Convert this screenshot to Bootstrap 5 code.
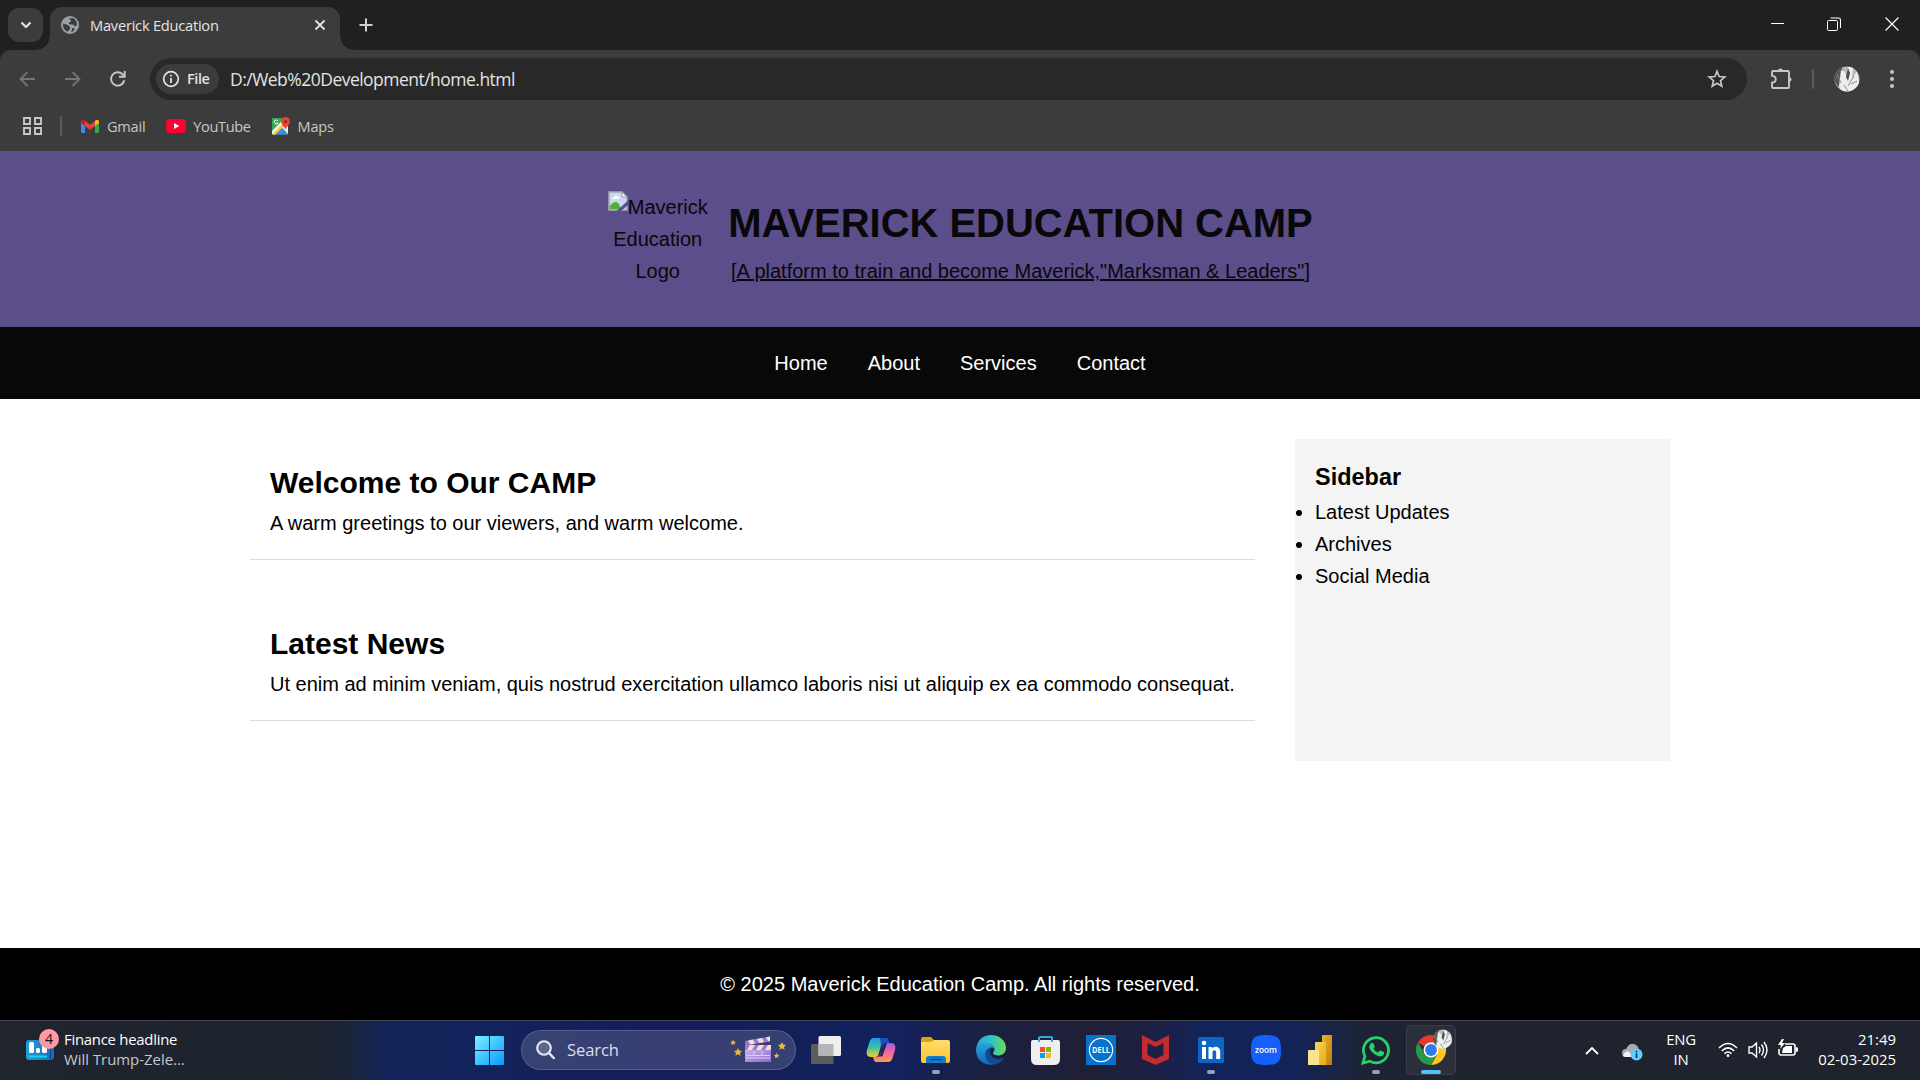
<!DOCTYPE html>
<html lang="en">
<head>
<meta charset="utf-8">
<title>Maverick Education</title>
<meta name="viewport" content="width=device-width, initial-scale=1">
<link href="https://cdn.jsdelivr.net/npm/bootstrap@5.3.0/dist/css/bootstrap.min.css" rel="stylesheet">
<style>
html,body{height:1080px;overflow:hidden}
body{font-family:"Open Sans","Noto Sans",sans-serif;color:#e3e3e3;background:#fff}
svg{display:block;flex:none}
.ui-text{white-space:nowrap;line-height:20px}
/* browser window */
.tabstrip{height:50px;background:#1f2120}
.tab-menu{width:35px;height:34px;border-radius:11px;background:#3c3c3c;margin:8px 7px 0 8px}
.active-tab{width:290px;height:43px;margin-top:7px;padding:0 10px 7px 11px;border-radius:12px 12px 0 0;background:#3c3c3c}
.active-tab::before,.active-tab::after{content:"";position:absolute;bottom:0;width:14px;height:14px}
.active-tab::before{left:-14px;background:radial-gradient(circle at 0 0,transparent 13.5px,#3c3c3c 14px)}
.active-tab::after{right:-14px;background:radial-gradient(circle at 100% 0,transparent 13.5px,#3c3c3c 14px)}
.tab-title{font-size:14.7px;letter-spacing:-.26px;margin-left:11px}
.win-buttons{padding:0 21px 2px 0;gap:43px}
.chrome-bars{background:#1f2120}
.tools{height:101px;background:#3c3c3c;border-radius:11px 11px 0 0}
.address-row{height:58px;padding-left:18px}
.omnibox{width:1597px;height:42px;border-radius:21px;background:#282828;padding:0 20px 0 6px;margin-left:23px}
.file-chip{width:63px;height:30px;border-radius:15px;background:#3c3c3c;padding-left:6px}
.file-chip span{font-size:14.5px;font-weight:600;letter-spacing:-.4px;margin-left:7px}
.url-text{font-size:17.5px;letter-spacing:-.52px;margin-left:11px}
.vline{width:2px;height:20px;background:#5b5b5b;border-radius:1px}
.marks{height:36px;padding-left:23px;font-size:14.6px;letter-spacing:-.25px;color:#c7c7c7}
/* web page */
.site{font-family:"Liberation Sans",Arial,sans-serif;font-size:20px;line-height:32px;color:#000}
.site h1,.site h2,.site h3,.site p,.site ul{margin:0}
.site-head{height:176px;background:#5b4e8b;color:#080808;padding:40px;gap:20px;text-align:center}
.site-head h1{font-size:40px;line-height:64px;font-weight:700;letter-spacing:-.03px}
.logo-alt{width:101px}
.logo-alt svg{display:inline-block;vertical-align:baseline;margin-top:-4px;transform:translateY(-3px)}
.site-nav{height:72px;background:#080808;gap:40px}
.site-nav a{color:#fff;text-decoration:none}
.site-main{width:1420px;height:549px;margin:0 auto;padding-top:40px;gap:40px}
.story{padding:20px;border-bottom:1px solid #ddd;margin-bottom:40px}
.story h2{font-size:30px;line-height:48px;font-weight:700}
.side{width:375px;height:322px;background:#f4f4f4;padding:20px}
.side h3{font-size:23.4px;line-height:37.4px;font-weight:700;letter-spacing:.05px}
.side ul{padding:0}
.site-foot{height:72px;background:#000;color:#fff}
/* taskbar */
.taskbar{height:60px;padding-bottom:1px;border-top:1px solid #43464f;background:linear-gradient(90deg,#1f242d 0,#1d232e 310px,#1a2438 345px,#12245a 390px,#12225a 500px,#171c5c 680px,#12205a 790px,#13215c 900px,#1b203f 990px,#1f1f36 1090px,#1b2046 1160px,#12235a 1205px,#13235a 1290px,#1c2338 1360px,#1f232e 1430px,#1e232d 100%)}
.news{width:462px;padding-left:26px}
.news-copy{font-size:14.9px;line-height:20px;letter-spacing:-.25px;color:#fff;margin:-3px 0 0 5px}
.slot{width:55px;height:58px}
.search-pill{width:275px;height:40px;border-radius:20px;margin:0 2.5px 0 4px;background:rgba(255,255,255,.15);border:1px solid rgba(255,255,255,.16);padding:0 9px 0 14px}
.search-pill span{font-size:16.6px;color:#dcdeea;margin-left:12px;letter-spacing:-.1px}
.run-dot{bottom:5px;left:50%;width:8px;height:4px;margin-left:-4px;border-radius:2px;background:#9a9db5}
.run-dot.wide{width:20px;margin-left:-10px;background:#4cc2ff}
.slot.current::before{content:"";position:absolute;left:2px;right:3px;top:4px;bottom:4px;border-radius:5px;background:rgba(255,255,255,.06);border:1px solid rgba(255,255,255,.07)}
.tray{font-size:14.9px;line-height:20px;color:#fff;padding-right:24px}
.tray .ui-text{margin-top:-3px}
</style>
<script src="https://cdn.jsdelivr.net/npm/bootstrap@5.3.0/dist/js/bootstrap.bundle.min.js"></script>
</head>
<body>
<div class="chrome-bars">
  <div class="tabstrip d-flex">
    <div class="tab-menu d-flex align-items-center justify-content-center"><svg width="12" height="8" viewBox="0 0 12 8"><path d="M1.500 1.500 6 6l4.500-4.500" fill="none" stroke="#e3e3e3" stroke-width="2.200"/></svg></div>
    <div class="active-tab position-relative d-flex align-items-center">
      <svg width="18" height="18" viewBox="0 0 18 18"><circle cx="9" cy="9" r="9" fill="#9aa0a6"/><path d="M2 7.500 7 9l2 2v2l-2 2.500C4 15 1.500 12 2 7.500ZM7.500 2.500 12 2c3 1.500 4.300 4.500 4 7l-2 1.500-2-2H9L7.500 7l2.300-1.500V4ZM11 12l3 .5-2 3-2 .5 1-2Z" fill="#3c3c3c"/></svg>
      <span class="tab-title ui-text">Maverick Education</span>
      <svg class="ms-auto" width="19" height="12" viewBox="0 0 19 12"><path d="m4.500 1.500 9 9M13.500 1.500l-9 9" stroke="#e3e3e3" stroke-width="1.800"/></svg>
    </div>
    <svg style="margin:18px 0 0 19px" width="14" height="14" viewBox="0 0 14 14"><path d="M7 .5v13M.5 7h13" stroke="#d0d0d0" stroke-width="2"/></svg>
    <div class="win-buttons d-flex align-items-center ms-auto">
      <svg width="13" height="13" viewBox="0 0 13 13"><path d="M0 5.500h13" stroke="#fff"/></svg>
      <svg width="14" height="14" viewBox="0 0 14 14" fill="none" stroke="#fff"><rect x=".5" y="3.500" width="10" height="10" rx="1"/><path d="M3.500 1h8a2 2 0 0 1 2 2v8" stroke-width="1.100"/></svg>
      <svg style="margin-left:1px" width="14" height="14" viewBox="0 0 14 14"><path d="m.5.5 13 13M13.500.5l-13 13" stroke="#fff" stroke-width="1.200"/></svg>
    </div>
  </div>
  <div class="tools">
    <div class="address-row d-flex align-items-center">
      <svg width="18" height="16" viewBox="0 0 18 16" fill="none" stroke="#757575" stroke-width="1.800"><path d="M17 8H3M9.500 1 2.500 8l7 7"/></svg>
      <svg style="margin-left:28px" width="18" height="16" viewBox="0 0 18 16" fill="none" stroke="#757575" stroke-width="1.800"><path d="M1 8h14M8.500 1l7 7-7 7"/></svg>
      <svg style="margin-left:27px" width="18" height="18" viewBox="0 0 18 18"><path d="M15.300 10.300A6.700 6.700 0 1 1 13.500 4.200L15.500 6" fill="none" stroke="#c7c7c7" stroke-width="1.900"/><path d="M15.700 1v5.700H10" fill="none" stroke="#c7c7c7" stroke-width="1.900"/></svg>
      <div class="omnibox d-flex align-items-center">
        <div class="file-chip d-flex align-items-center"><svg width="18" height="18" viewBox="0 0 18 18"><circle cx="9" cy="9" r="7.300" fill="none" stroke="#e3e3e3" stroke-width="1.700"/><path d="M9 8v5M9 4.800v1.800" stroke="#e3e3e3" stroke-width="1.800"/></svg><span class="ui-text">File</span></div>
        <span class="url-text ui-text">D:/Web%20Development/home.html</span>
        <svg class="ms-auto" width="20" height="20" viewBox="0 0 20 20"><path d="m10 2.300 2.100 5.200 5.700.5-4.300 3.700 1.300 5.600-4.800-3-4.800 3 1.300-5.600L2.200 8l5.700-.5Z" fill="none" stroke="#c7c7c7" stroke-width="1.700"/></svg>
      </div>
      <svg style="margin-left:23px" width="22" height="22" viewBox="0 0 22 22"><path d="M3 3h15q1 0 1 1v15q0 1-1 1H3q-1 0-1-1v-4.500c5-.3 5-6.300 0-6.600V4q0-1 1-1Z" fill="none" stroke="#c7c7c7" stroke-width="1.900" stroke-linejoin="round"/><path d="M8 3a2.500 2.500 0 0 1 5 0ZM19 9a2.500 2.500 0 0 1 0 5Z" fill="#c7c7c7"/></svg>
      <div class="vline" style="margin-left:20px"></div>
      <svg style="margin-left:20px" width="26" height="26" viewBox="0 0 26 26"><defs><clipPath id="av"><circle cx="13" cy="13" r="12.500"/></clipPath><g id="face" clip-path="url(#av)"><path fill="#b8b8b8" d="M0 0h26v26H0z"/><path d="M0 6 8 1l1 15-5 5-4-7Z" fill="#555"/><path d="m5 20 2-16 4 2 2 7 1-12h5l-1 12 5-8 3 15-9 7H8Z" fill="#eee"/><path d="m14 2 2 5-2 8-2-4Z" fill="#4c4c4c"/><path d="m3 8 4 9M20 10l-6 10M10 19l4 6M23 15l-6 3" fill="none" stroke="#8b8b8b"/></g></defs><use href="#face"/></svg>
      <svg style="margin-left:30px" width="4" height="20" viewBox="0 0 4 20" fill="#c7c7c7"><circle cx="2" cy="3" r="2"/><circle cx="2" cy="10" r="2"/><circle cx="2" cy="17" r="2"/></svg>
    </div>
    <div class="marks d-flex align-items-center">
      <svg width="19" height="18" viewBox="0 0 19 18" fill="none" stroke="#c7c7c7" stroke-width="1.900"><path d="M1 1h6v6H1zM12 1h6v6h-6zM1 11h6v6H1zM12 11h6v6h-6z"/></svg>
      <div class="vline" style="margin-left:18px"></div>
      <svg style="margin-left:19px" width="18" height="14" viewBox="0 0 18 14"><path d="M0 3.500 4 6v8H1.500Q0 14 0 12.500Z" fill="#4285f4"/><path d="m14 6 4-2.500v9q0 1.500-1.500 1.500H14Z" fill="#34a853"/><path d="M4 2v5l5 3.700L14 7V2L9 5.700Z" fill="#ea4335"/><path d="M14 1.700C16 0 18 .5 18 3v1l-4 3Z" fill="#fbbc04"/><path d="M4 1.700C2 0 0 .5 0 3v1l4 3Z" fill="#c5221f"/></svg>
      <span class="ui-text" style="margin-left:8px">Gmail</span>
      <svg style="margin-left:21px" width="20" height="14" viewBox="0 0 20 14"><rect width="20" height="14" rx="3.500" fill="#ff0033"/><path d="m8 4 5.300 3L8 10Z" fill="#fff"/></svg>
      <span class="ui-text" style="margin-left:7px;letter-spacing:-.4px">YouTube</span>
      <svg style="margin-left:21px" width="18" height="18" viewBox="0 0 18 18"><path d="M1 1h14q1 0 1 1v15.500H1q-1 0-1-1V2q0-1 1-1Z" fill="#34a853"/><path d="m8.500 9.500 7.500 8H1Z" fill="#4285f4"/><path d="M16 6v11L9 9.500Z" fill="#e8eaed"/><path d="M0 13.500 10.500 3l3 4L3 17.500H1q-1 0-1-1Z" fill="#f1f1f1"/><path d="m1 16.500 10-10 1.700 1.700-9.200 9.300H1.500Z" fill="#fbc934"/><path d="M0 2q0-1 1-1h9v2.500L0 14Z" fill="#34a853"/><path d="M5.800 3.800A2 2 0 1 0 6 6H4.300" fill="none" stroke="#fff"/><path d="M13.500 0A4.400 4.400 0 0 1 18 4.400C18 8 14.500 9 13.500 12.500 12.500 9 9.200 8 9.200 4.400A4.400 4.400 0 0 1 13.500 0Z" fill="#ea4335"/><circle cx="13.500" cy="4.500" r="1.600" fill="#9b2720"/></svg>
      <span class="ui-text" style="margin-left:8px">Maps</span>
    </div>
  </div>
</div>

<div class="site">
  <header class="site-head d-flex justify-content-center">
    <div class="logo-alt"><svg width="20" height="20" viewBox="0 0 20 20"><path d="M1 1h13l5 5v13H1z" fill="#c5d8f7" stroke="#aaa" stroke-width="1.500"/><path d="M4 8q0-2 2-2 1-3 3.500-1Q12 6 11 8Z" fill="#fff"/><path d="M2 18v-3q5-7 9-2l2 5Z" fill="#4fae35"/><path d="M20 9.500V14l-7 6H8.500Z" fill="#5b4e8b"/><path d="M14 1v5h5Z" fill="#fff" stroke="#999"/></svg>Maverick Education Logo</div>
    <div>
      <h1>MAVERICK EDUCATION CAMP</h1>
      <p>[<u>A platform to train and become Maverick,"Marksman &amp; Leaders"</u>]</p>
    </div>
  </header>
  <nav class="site-nav d-flex justify-content-center align-items-center"><a href="#">Home</a><a href="#">About</a><a href="#">Services</a><a href="#">Contact</a></nav>
  <main class="site-main d-flex align-items-start">
    <div class="flex-grow-1">
      <section class="story"><h2>Welcome to Our CAMP</h2><p>A warm greetings to our viewers, and warm welcome.</p></section>
      <section class="story"><h2>Latest News</h2><p>Ut enim ad minim veniam, quis nostrud exercitation ullamco laboris nisi ut aliquip ex ea commodo consequat.</p></section>
    </div>
    <aside class="side flex-shrink-0"><h3>Sidebar</h3><ul><li>Latest Updates</li><li>Archives</li><li>Social Media</li></ul></aside>
  </main>
  <footer class="site-foot d-flex justify-content-center align-items-center">© 2025 Maverick Education Camp. All rights reserved.</footer>
</div>

<div class="taskbar d-flex align-items-center">
  <div class="news d-flex align-items-center">
    <svg width="33" height="32" viewBox="0 0 33 32" style="margin-top:-11px"><defs><linearGradient id="nw"><stop stop-color="#1f9fd0"/><stop offset="1" stop-color="#1769c0"/></linearGradient></defs><rect y="11" width="28" height="20" rx="3" fill="url(#nw)"/><path d="M24 13h1v18h-1z" fill="#0d3d7a"/><rect x="3" y="13" width="5" height="11" rx="1.500" fill="#fff"/><rect x="10" y="19" width="4" height="5" rx="1.500" fill="#fff"/><rect x="16" y="16" width="5" height="8" rx="1.500" fill="#fff"/><path d="M3 27.500h18" stroke="#19d3ee" stroke-width="2"/><circle cx="23" cy="10" r="10" fill="#ff99a4"/><text x="23" y="15.300" text-anchor="middle" font-size="14" fill="#111">4</text></svg>
    <div class="news-copy"><div class="ui-text">Finance headline</div><div class="ui-text" style="color:#c6c8cc;letter-spacing:0">Will Trump-Zele...</div></div>
  </div>
  <div class="slot d-flex align-items-center justify-content-center"><svg width="29" height="29" viewBox="0 0 29 29"><defs><linearGradient id="wn" x2="1" y2="1"><stop stop-color="#7cf0ff"/><stop offset="1" stop-color="#0798ff"/></linearGradient></defs><path d="M1 0h13v14H0V1q0-1 1-1ZM15 0h13q1 0 1 1v13H15ZM0 15h14v14H1q-1 0-1-1ZM15 15h14v13q0 1-1 1H15Z" fill="url(#wn)"/></svg></div>
  <div class="search-pill d-flex align-items-center">
    <svg width="19" height="20" viewBox="0 0 19 20"><circle cx="8" cy="8" r="6.800" fill="#5c6791" stroke="#e8eaf2" stroke-width="2.100"/><path d="m13 13 4.700 5" stroke="#e8eaf2" stroke-width="2.500" stroke-linecap="round"/></svg>
    <span class="ui-text">Search</span>
    <svg class="ms-auto" width="56" height="28" viewBox="0 0 56 28"><defs><linearGradient id="cl" y2="1"><stop stop-color="#c8b6f0"/><stop offset="1" stop-color="#9068c8"/></linearGradient></defs><path d="M15 13h26v13H15Z" fill="url(#cl)"/><path d="m15 5 25-4.500v5L15.500 9.500Z" fill="#9b7cd0"/><path d="m18 4.500 5-1 2 4.300-4.500.8ZM27 3l5-1 2 4.200-4.500.8ZM36 1.300l4-.8v4.600l-1.700.2Z" fill="#f8ddd5"/><path d="M15 9h26v5H15Z" fill="#9b7cd0"/><path d="m20 9-3 5h5l3-5ZM29 9l-3 5h5l3-5ZM38 9l-3 5h5l1-1V9Z" fill="#f8ddd5"/><path d="M16 19.500h24M16 22h24M24 15v4M32 15v4" stroke="#ddcdf7"/><g fill="#f1b63b"><path id="st" d="m8 12 1.200 2.600 2.800.3-2 2 .6 2.800L8 18.300l-2.600 1.400.6-2.800-2-2 2.800-.3Z"/><use href="#st" transform="translate(44 -6)"/><use href="#st" transform="translate(-2.500 -4.700) scale(.7)"/><use href="#st" transform="translate(41 8.500) scale(.7)"/></g></svg>
  </div>
  <div class="slot d-flex align-items-center justify-content-center"><svg width="30" height="28" viewBox="0 0 30 28"><rect y="8" width="22.500" height="20" rx="1.500" fill="#5c5c5c"/><rect x="7.500" width="22.500" height="20" rx="1.500" fill="#efefef"/><path d="M7.500 8h15v12H9q-1.500 0-1.500-1.500Z" fill="#b5b5b5"/></svg></div>
  <div class="slot d-flex align-items-center justify-content-center"><svg width="30" height="28" viewBox="0 0 30 28"><defs><linearGradient id="ca" x2="0" y2="1"><stop stop-color="#1b9bea"/><stop offset=".5" stop-color="#3dc3a0"/><stop offset="1" stop-color="#f6cd28"/></linearGradient><linearGradient id="cb" x2="0" y2="1"><stop stop-color="#a65ae8"/><stop offset=".5" stop-color="#f267a0"/><stop offset="1" stop-color="#ff9a4c"/></linearGradient></defs><path d="M8 2h11c3 0 3 2 4 5h-4c-3 0-4 2-4.500 4.500l-2 7C12 20 11 21 9 21H5c-4 0-5-3-4-7L3.500 6C4.300 3.500 5.500 2 8 2Z" fill="url(#ca)"/><path d="M14 2h5c3 0 3 2 4 5h-4c-2 0-3 1-4 3Z" fill="#1b50c4"/><path d="M22 26H11c-3 0-3-2-4-5h3c3 0 4-1.500 4.700-4l2-7c.6-2 1.500-3 4.300-3h4c4 0 5 3 4 7l-2.500 8c-.8 2.500-2 4-4.500 4Z" fill="url(#cb)"/><path d="m15.500 14 2-5c1-2 1.500-2 3.500-2l-4.500 13-4 1c2-1 2-3 3-7Z" fill="#18255d"/></svg></div>
  <div class="slot position-relative d-flex align-items-center justify-content-center"><svg width="30" height="28" viewBox="0 0 30 28"><defs><linearGradient id="fo" x2="0" y2="1"><stop stop-color="#ffdd70"/><stop offset="1" stop-color="#ffc52c"/></linearGradient></defs><path d="M0 3q0-2 2-2h8l3 3h14v5H0Z" fill="#e3a008"/><path d="M0 7q0-1 1-1h9l3-2h14q2 0 2 2v19q0 2-2 2H2q-2 0-2-2Z" fill="url(#fo)"/><path d="M5 23q0-3 3-3h14q3 0 3 3v4H5Z" fill="#127ccc"/><path d="M9 23.500h12" stroke="#0a4b86" stroke-width="1.500"/></svg><i class="run-dot position-absolute"></i></div>
  <div class="slot d-flex align-items-center justify-content-center"><svg width="30" height="30" viewBox="0 0 30 30"><defs><linearGradient id="eg"><stop stop-color="#26a9df"/><stop offset=".55" stop-color="#32c5bd"/><stop offset="1" stop-color="#6ddc50"/></linearGradient><linearGradient id="eb" x2="0" y2="1"><stop stop-color="#2aa6e2"/><stop offset="1" stop-color="#1265ba"/></linearGradient></defs><path d="M0 15C1 5 7 0 15 0c9 0 15 6 15 13 0 5-4 7.500-8 7.500-3 0-5-1-5-2.500 0-1 1.500-2 1.500-4 0-3-3-5.500-7-5.500C6 8.500 1 12 0 15Z" fill="url(#eg)"/><path d="M0 15C0 11 5 7.500 10 7.500c5 0 8.500 3 8.500 6.500-1-1.500-3-2-5-1-4 2-4 8-.5 11.500 3 3 8 4 11 2.500C15 33 0 29 0 15Z" fill="url(#eb)"/><path d="M13 13c-6 3-5 11 1 15 5 3 12-.5 14-5.500-5 3-13 1-14-5-.2-2 .5-3.500 1.500-5Z" fill="#0e4d91"/></svg></div>
  <div class="slot d-flex align-items-center justify-content-center"><svg width="30" height="30" viewBox="0 0 30 30"><path d="M0 7q0-2 2-2h25q2 0 2 2v17q0 6-6 6H6q-6 0-6-6Z" fill="#efefef"/><path d="M8 7V2.500Q8 2 9.500 2h10Q21 2 21 2.500V7" fill="none" stroke="#2ba9e8" stroke-width="2"/><path d="M9 12h5v5H9z" fill="#f25022"/><path d="M15 12h5v5h-5z" fill="#7fba00"/><path d="M9 18h5v5H9z" fill="#00a4ef"/><path d="M15 18h5v5h-5z" fill="#ffb900"/></svg></div>
  <div class="slot d-flex align-items-center justify-content-center"><svg width="30" height="30" viewBox="0 0 30 30"><path fill="#0672cb" d="M0 0h30v30H0z"/><circle cx="15" cy="15" r="11.600" fill="none" stroke="#fff" stroke-width="1.200"/><text x="15" y="17.800" text-anchor="middle" font-size="8" font-weight="700" fill="#fff" textLength="18" lengthAdjust="spacingAndGlyphs">DELL</text></svg></div>
  <div class="slot d-flex align-items-center justify-content-center"><svg width="28" height="30" viewBox="0 0 28 30"><path d="m0 0 13.500 7L27 0v24l-13.500 6L0 24Zm5.500 8v12l8 4 8-4V8l-8 4Z" fill="#c42b2c"/></svg></div>
  <div class="slot position-relative d-flex align-items-center justify-content-center"><svg width="26" height="26" viewBox="0 0 26 26"><rect width="26" height="26" rx="1.500" fill="#0a66c2"/><path d="M4 10h4v12H4zM10.500 10h3.700v1.700c2-3.200 8-2.500 8 3V22h-4v-6.500c0-3-3.700-3-3.700 0V22h-4z" fill="#fff"/><circle cx="6" cy="6" r="2.300" fill="#fff"/></svg><i class="run-dot position-absolute"></i></div>
  <div class="slot d-flex align-items-center justify-content-center"><svg width="30" height="30" viewBox="0 0 30 30"><path d="M15 0C27 0 30 3 30 15s-3 15-15 15S0 27 0 15 3 0 15 0Z" fill="#1560fa"/><text x="15" y="17.500" text-anchor="middle" font-size="8.500" font-weight="600" fill="#fff" textLength="22" lengthAdjust="spacingAndGlyphs">zoom</text></svg></div>
  <div class="slot d-flex align-items-center justify-content-center"><svg width="26" height="30" viewBox="0 0 26 30"><defs><linearGradient id="p1" x2="1" y2="1"><stop stop-color="#eab52b"/><stop offset="1" stop-color="#c6780c"/></linearGradient><linearGradient id="p2" x2="1" y2="1"><stop stop-color="#f7d65b"/><stop offset="1" stop-color="#e8ac15"/></linearGradient></defs><path d="M14 1q0-1 1-1h9v30H14z" fill="url(#p1)"/><path d="M7 8q0-1 1-1h9q1 0 1 1v22H7z" fill="url(#p2)"/><path d="M0 16q0-1 1-1h9q1 0 1 1v14H0z" fill="#f9e589"/></svg></div>
  <div class="slot position-relative d-flex align-items-center justify-content-center"><svg width="30" height="30" viewBox="0 0 31 31"><path d="M2 29l2-7.200A13 13 0 1 1 9 27Z" fill="none" stroke="#25d366" stroke-width="2.800"/><path d="M10.500 8.500c1-1 2-.5 2.500.5l1.200 2.800c.2.800-.8 1.500-1.300 2.200 1 2 2.600 3.400 4.600 4.200l1.700-2c.5-.4 1-.2 1.600.1l2.600 1.300c.8.5.6 2-.1 2.900-1.300 1.600-3.500 2.200-5.600 1.300-4-1.500-7-4-8.800-7.500-1-2-.1-4.500 1.600-5.800Z" fill="#25d366"/></svg><i class="run-dot position-absolute"></i></div>
  <div class="slot current position-relative d-flex align-items-center justify-content-center"><svg class="position-relative" width="37" height="42" viewBox="0 0 37 42" style="left:3.500px"><g transform="translate(0 6)"><path d="M2 7.500A15 15 0 0 1 28 7.500L15 15Z" fill="#e8392f"/><path d="M15 7.500h13A15 15 0 0 1 15 30L21.500 18.700Z" fill="#ffc524"/><path d="M2 7.500 8.500 18.700c3 4 8 5 13 0L15 30A15 15 0 0 1 2 7.500Z" fill="#279847"/><circle cx="15" cy="15" r="7.500" fill="#fff"/><circle cx="15" cy="15" r="5.900" fill="#3079e8"/></g><use href="#face" transform="translate(16.500 0) scale(.77)"/></svg><i class="run-dot wide position-absolute"></i></div>
  <div class="tray d-flex align-items-center ms-auto">
    <svg width="14" height="9" viewBox="0 0 14 9"><path d="m1 8 6-6 6 6" fill="none" stroke="#fff" stroke-width="1.800"/></svg>
    <svg style="margin:4px 0 0 23px" width="21" height="18" viewBox="0 0 21 18"><path d="M4 14a4 4 0 0 1 0-8q3-6 8-5 4 1 5 6v7Z" fill="#aaa"/><path d="M1 13q1-4 5-5l6 6H4q-2 0-3-1Z" fill="#f2f2f2"/><circle cx="14.500" cy="11.500" r="6" fill="#60cdff"/><path d="M14.500 10.500v4.500M14.500 7.800v1.700" stroke="#12303f" stroke-width="1.600"/></svg>
    <div class="text-center ui-text" style="margin-left:23px;width:30px;letter-spacing:-.3px">ENG<br>IN</div>
    <svg style="margin-left:22px" width="20" height="16" viewBox="0 0 20 16" fill="none" stroke="#fff" stroke-width="1.500"><path d="M1 6q9-9 18 0M3.800 9q6.200-6.200 12.400 0M6.500 11.700q3.500-3.400 7 0"/><circle cx="10" cy="13.700" r="1.400" fill="#fff" stroke="none"/></svg>
    <svg style="margin-left:10px" width="20" height="18" viewBox="0 0 20 18" fill="none" stroke="#fff" stroke-width="1.400"><path d="M1 6h3l4.500-4v14L4 12H1Zm10 0q2 3 0 6m2.500-8.500q4 5.500 0 11M16 1q6 8 0 16"/></svg>
    <svg style="margin:-4px 0 0 10px" width="20" height="18" viewBox="0 0 20 18"><path d="M7 5h8q2 0 2 2v7q0 2-2 2H3q-2 0-2-2v-4" fill="none" stroke="#fff" stroke-width="1.600"/><path d="M5 9 8 7h6v7H4ZM18 8q2 0 2 1.500v2Q20 13 18 13ZM4 0 0 6h3l-1 4 5-6H4l2-4Z" fill="#fff"/></svg>
    <div class="text-end ui-text" style="width:98px;letter-spacing:0">21:49<br>02-03-2025</div>
  </div>
</div>
</body>
</html>
